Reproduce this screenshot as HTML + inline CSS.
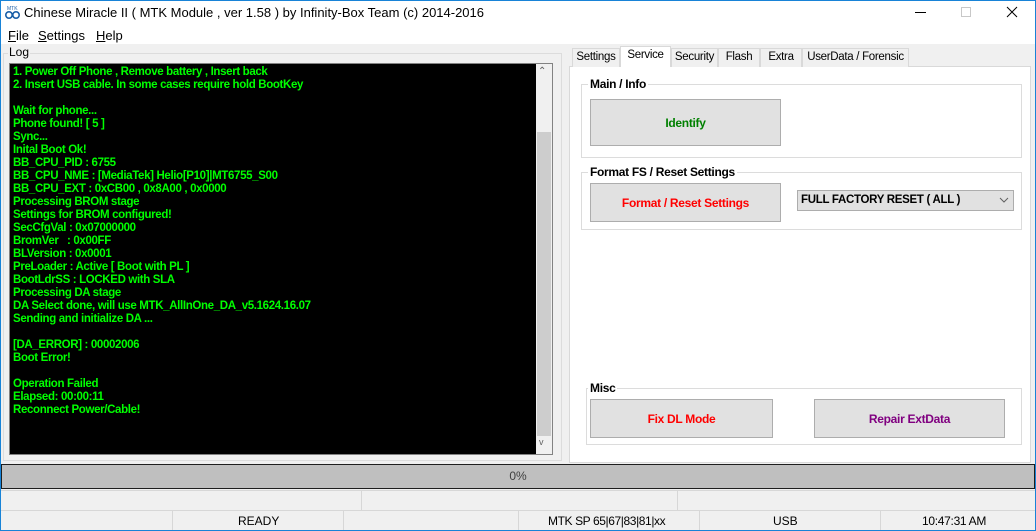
<!DOCTYPE html>
<html><head><style>
*{margin:0;padding:0;box-sizing:border-box}
body{width:1036px;height:531px;position:relative;overflow:hidden;background:#f0f0f0;font-family:"Liberation Sans",sans-serif;font-size:12px;color:#000}
.a{position:absolute}
.btn{position:absolute;background:#e1e1e1;border:1px solid #adadad;font-weight:bold;font-size:12px;display:flex;align-items:center;justify-content:center;letter-spacing:-0.3px}
.grp{position:absolute;border:1px solid #dcdcdc}
.gl{position:absolute;top:-8px;left:6px;background:#fff;padding:0 2px;font-weight:bold;font-size:12px;letter-spacing:-0.3px}
.tab{position:absolute;top:48px;height:19px;border:1px solid #d9d9d9;border-bottom:none;background:#f0f0f0;font-size:11.5px;letter-spacing:-0.3px;white-space:nowrap;overflow:hidden;padding:2px 0 0 0;text-align:center}
#log div{height:13px;line-height:13px;white-space:pre}
.sc{position:absolute;border-left:1px solid #d7d7d7;height:19px}
</style></head><body>
<div class="a" style="left:0;top:0;width:1036px;height:44px;background:#fff"></div>
<div class="a" style="left:0;top:0;width:1036px;height:531px;border:1px solid #1883d7;z-index:10;pointer-events:none"></div>
<svg class="a" style="left:4px;top:5px" width="18" height="15"><text x="3" y="5" font-size="5" fill="#1a5fa8" font-family="Liberation Sans">MTK</text><circle cx="5" cy="10" r="3.2" fill="none" stroke="#1a5fa8" stroke-width="1.6"/><circle cx="12" cy="10" r="3.2" fill="none" stroke="#1a5fa8" stroke-width="1.6"/></svg>
<div class="a" style="left:24px;top:5px;font-size:13px">Chinese Miracle II ( MTK Module , ver 1.58 ) by Infinity-Box Team (c) 2014-2016</div>
<div class="a" style="left:915px;top:12px;width:11px;height:1px;background:#000"></div>
<div class="a" style="left:961px;top:7px;width:10px;height:10px;border:1px solid #c8c8c8"></div>
<svg class="a" style="left:1006px;top:6px" width="12" height="12"><path d="M1 1L11 11M11 1L1 11" stroke="#000" stroke-width="1"/></svg>
<div class="a" style="left:8px;top:28px;font-size:13px"><u>F</u>ile</div>
<div class="a" style="left:38px;top:28px;font-size:13px"><u>S</u>ettings</div>
<div class="a" style="left:96px;top:28px;font-size:13px"><u>H</u>elp</div>
<div class="a" style="left:3px;top:53px;width:559px;height:408px;border:1px solid #dcdcdc"></div>
<div class="a" style="left:8px;top:45px;font-size:12px;background:#f0f0f0;padding:0 1px">Log</div>
<div class="a" style="left:9px;top:63px;width:544px;height:392px;border:1px solid #828282;background:#000"></div>
<div class="a" style="left:536px;top:64px;width:16px;height:390px;background:#f0f0f0"></div>
<div class="a" style="left:537px;top:132px;width:14px;height:304px;background:#cdcdcd"></div>
<div class="a" style="left:538px;top:66px;font-size:10px;color:#606060">&#8963;</div>
<div class="a" style="left:539px;top:437px;font-size:9px;color:#606060">v</div>
<div id="log" class="a" style="left:13px;top:66px;color:#00ff00;font-weight:bold;font-size:11.5px;letter-spacing:-0.35px">
<div>1. Power Off Phone , Remove battery , Insert back</div>
<div>2. Insert USB cable. In some cases require hold BootKey</div>
<div></div>
<div>Wait for phone...</div>
<div>Phone found! [ 5 ]</div>
<div>Sync...</div>
<div>Inital Boot Ok!</div>
<div>BB_CPU_PID : 6755</div>
<div>BB_CPU_NME : [MediaTek] Helio[P10]|MT6755_S00</div>
<div>BB_CPU_EXT : 0xCB00 , 0x8A00 , 0x0000</div>
<div>Processing BROM stage</div>
<div>Settings for BROM configured!</div>
<div>SecCfgVal : 0x07000000</div>
<div>BromVer   : 0x00FF</div>
<div>BLVersion : 0x0001</div>
<div>PreLoader : Active [ Boot with PL ]</div>
<div>BootLdrSS : LOCKED with SLA</div>
<div>Processing DA stage</div>
<div>DA Select done, will use MTK_AllInOne_DA_v5.1624.16.07</div>
<div>Sending and initialize DA ...</div>
<div></div>
<div>[DA_ERROR] : 00002006</div>
<div>Boot Error!</div>
<div></div>
<div>Operation Failed</div>
<div>Elapsed: 00:00:11</div>
<div>Reconnect Power/Cable!</div>
</div>
<div class="a" style="left:569px;top:66px;width:462px;height:397px;background:#fff;border:1px solid #d9d9d9"></div>
<div class="tab" style="left:572px;width:48px">Settings</div>
<div class="tab" style="left:620px;top:46px;height:21px;width:51px;background:#fff;z-index:2">Service</div>
<div class="tab" style="left:671px;width:47px">Security</div>
<div class="tab" style="left:718px;width:42px">Flash</div>
<div class="tab" style="left:760px;width:42px">Extra</div>
<div class="tab" style="left:802px;width:107px">UserData / Forensic</div>
<div class="grp" style="left:581px;top:84px;width:441px;height:74px"><div class="gl">Main / Info</div></div>
<div class="btn" style="left:590px;top:99px;width:191px;height:47px;color:#008000">Identify</div>
<div class="grp" style="left:581px;top:172px;width:441px;height:58px"><div class="gl">Format FS / Reset Settings</div></div>
<div class="btn" style="left:590px;top:183px;width:191px;height:39px;color:#ff0000">Format / Reset Settings</div>
<div class="a" style="left:797px;top:190px;width:217px;height:21px;background:#e1e1e1;border:1px solid #adadad;font-weight:bold;font-size:11.5px;padding:3px 0 0 3px;letter-spacing:-0.3px">FULL FACTORY RESET ( ALL )</div>
<svg class="a" style="left:999px;top:197px" width="10" height="6"><path d="M1 1L5 5L9 1" stroke="#606060" fill="none"/></svg>
<div class="grp" style="left:586px;top:388px;width:436px;height:57px"><div class="gl" style="left:1px">Misc</div></div>
<div class="btn" style="left:590px;top:399px;width:183px;height:39px;color:#ff0000">Fix DL Mode</div>
<div class="btn" style="left:814px;top:399px;width:191px;height:39px;color:#800080">Repair ExtData</div>
<div class="a" style="left:1px;top:464px;width:1034px;height:25px;background:#bfbfbf;border:1px solid #1e1e1e;text-align:center;line-height:23px;color:#404040;font-size:12px">0%</div>
<div class="a" style="left:1px;top:490px;width:1034px;height:1px;background:#d7d7d7"></div>
<div class="sc" style="left:361px;top:491px"></div>
<div class="sc" style="left:677px;top:491px"></div>
<div class="a" style="left:1px;top:510px;width:1034px;height:1px;background:#d7d7d7"></div>
<div class="sc" style="left:172px;top:511px"></div>
<div class="sc" style="left:343px;top:511px"></div>
<div class="sc" style="left:518px;top:511px"></div>
<div class="sc" style="left:699px;top:511px"></div>
<div class="sc" style="left:880px;top:511px"></div>
<div class="a" style="left:238px;top:514px">READY</div>
<div class="a" style="left:548px;top:514px;letter-spacing:-0.4px">MTK SP 65|67|83|81|xx</div>
<div class="a" style="left:773px;top:514px">USB</div>
<div class="a" style="left:922px;top:514px;letter-spacing:-0.3px">10:47:31 AM</div>
</body></html>
